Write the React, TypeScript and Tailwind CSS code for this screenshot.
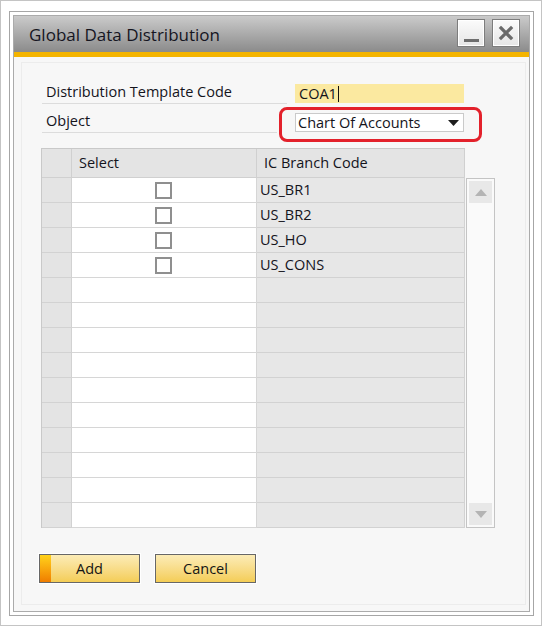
import React from 'react';

const font = { fontFamily: '"Open Sans", "Noto Sans", "DejaVu Sans", sans-serif' };

const branches = ['US_BR1', 'US_BR2', 'US_HO', 'US_CONS'];
const ROWS = 14;

const TitleButton: React.FC<{ kind: 'min' | 'close' }> = ({ kind }) => (
    <div className="w-[28px] h-[28px] border border-[#7d7d7d] bg-gradient-to-b from-[#fbfbfb] to-[#e6e6e6] shadow-[inset_0_0_0_1px_#ffffff] flex items-center justify-center">
        {kind === 'min' ? (
            <div className="w-[15px] h-[3px] bg-[#6e6e6e] mt-[14px]"></div>
        ) : (
            <svg width="16" height="16" viewBox="0 0 16 16">
                <path d="M3 3 L13 13 M13 3 L3 13" stroke="#6b6b6b" strokeWidth="3.2" strokeLinecap="square" />
            </svg>
        )}
    </div>
);

const Checkbox: React.FC = () => (
    <div className="w-[17px] h-[17px] border-2 border-[#8f8f8f] bg-white"></div>
);

const ScrollArrow: React.FC<{ up?: boolean }> = ({ up }) => (
    <div className="w-[23px] h-[22px] bg-[#e8e8e8] flex items-center justify-center">
        <svg width="12" height="7" viewBox="0 0 12 7">
            {up ? <path d="M0 7 L6 0 L12 7 Z" fill="#b4b4b4" /> : <path d="M0 0 L6 7 L12 0 Z" fill="#b4b4b4" />}
        </svg>
    </div>
);

const FormButton: React.FC<{ label: string; primary?: boolean }> = ({ label, primary }) => (
    <div className="w-[101px] h-[29px] border border-[#676767] shadow-[0_0_0_1px_#ffffff] bg-gradient-to-b from-[#fcecb6] to-[#f4cd55] flex relative">
        {primary && <div className="w-[11px] h-full bg-gradient-to-b from-[#ffd21a] to-[#ef7d00]"></div>}
        <div className="absolute inset-0 flex items-center justify-center text-[14.5px] text-[#141414]">{label}</div>
    </div>
);

export default function App() {
    return (
        <div className="w-[542px] h-[626px] border border-[#c4c4c4] bg-white pl-[8px] pt-[10px]" style={font}>
            <div className="w-[525px] h-[605px] border border-[#a6a6a6] bg-white p-[3px]">
                <div className="h-full border border-[#ababab] flex flex-col">
                    {/* title bar */}
                    <div className="h-[36px] bg-gradient-to-b from-[#cbcbcb] to-[#8b8b8b] flex items-start justify-between pl-[15px] pr-[9px]">
                        <span className="text-[17px] leading-[38px] text-[#15151f]">Global Data Distribution</span>
                        <div className="flex gap-[7px] pt-[3px]">
                            <TitleButton kind="min" />
                            <TitleButton kind="close" />
                        </div>
                    </div>
                    <div className="h-[5px] bg-[#f4b400]"></div>

                    {/* body */}
                    <div className="flex-1 bg-[#f7f7f7] pl-[7px] pt-[5px] pr-[3px] pb-[6px]">
                        <div className="h-full border border-[#ececec] text-[14.5px] text-[#14141c]">
                            <div className="pt-[12px] pl-[20px]">
                                <div className="h-[29px] flex items-end">
                                    <div className="w-[245px] h-full border-b border-[#dcdcdc] flex items-end pb-[1px] pl-[4px] leading-[20px]">
                                        Distribution Template Code
                                    </div>
                                    <div className="ml-[8px] mb-[1px] w-[169px] h-[19px] bg-[#fbe9a0] pl-[4px] flex items-center leading-[19px]">
                                        COA1
                                        <span className="ml-[1px] w-[1px] h-[16px] bg-[#111]"></span>
                                    </div>
                                </div>
                                <div className="h-[29px] flex items-end relative">
                                    <div className="w-[235px] h-full border-b border-[#dcdcdc] flex items-end pb-[1px] pl-[4px] leading-[20px]">
                                        Object
                                    </div>
                                    <div className="ml-[18px] mb-[1px] w-[169px] h-[19px] bg-white border border-[#cacaca] pl-[2px] pr-[4px] flex items-center justify-between leading-[17px]">
                                        <span>Chart Of Accounts</span>
                                        <svg width="11" height="6" viewBox="0 0 11 6">
                                            <path d="M0 0 L11 0 L5.5 6 Z" fill="#1e1e1e" />
                                        </svg>
                                    </div>
                                    <div className="absolute left-[237px] top-[3px] w-[203px] h-[35px] border-[3px] border-[#e3212b] rounded-[8px]"></div>
                                </div>
                            </div>

                            {/* grid */}
                            <div className="mt-[15px] pl-[19px] flex items-start">
                                <div className="border-l border-t border-[#c9c9c9] grid grid-cols-[30px_185px_208px]">
                                    <div className="h-[29px] bg-[#e4e4e4] border-r border-b border-[#d0d0d0]"></div>
                                    <div className="h-[29px] bg-[#e4e4e4] border-r border-b border-[#d0d0d0] pl-[7px] leading-[28px]">Select</div>
                                    <div className="h-[29px] bg-[#e4e4e4] border-r border-b border-[#d0d0d0] pl-[7px] leading-[28px]">IC Branch Code</div>
                                    {Array.from({ length: ROWS }).map((_, i) => (
                                        <React.Fragment key={i}>
                                            <div className="h-[25px] bg-[#e4e4e4] border-r border-b border-[#d2d2d2]"></div>
                                            <div className="h-[25px] bg-white border-r border-b border-[#d6d6d6] flex items-center justify-center pr-[2px]">
                                                {branches[i] && <Checkbox />}
                                            </div>
                                            <div className="h-[25px] bg-[#e7e7e7] border-r border-b border-[#d2d2d2] pl-[3px] leading-[24px]">
                                                {branches[i] ?? ''}
                                            </div>
                                        </React.Fragment>
                                    ))}
                                </div>
                                <div className="mt-[30px] ml-[1px] w-[29px] h-[350px] border border-[#c4c4c4] bg-[#fafafa] p-[2px] flex flex-col justify-between">
                                    <ScrollArrow up />
                                    <ScrollArrow />
                                </div>
                            </div>

                            {/* buttons */}
                            <div className="mt-[26px] pl-[17px] flex gap-[15px]">
                                <FormButton label="Add" primary />
                                <FormButton label="Cancel" />
                            </div>
                        </div>
                    </div>
                </div>
            </div>
        </div>
    );
}
